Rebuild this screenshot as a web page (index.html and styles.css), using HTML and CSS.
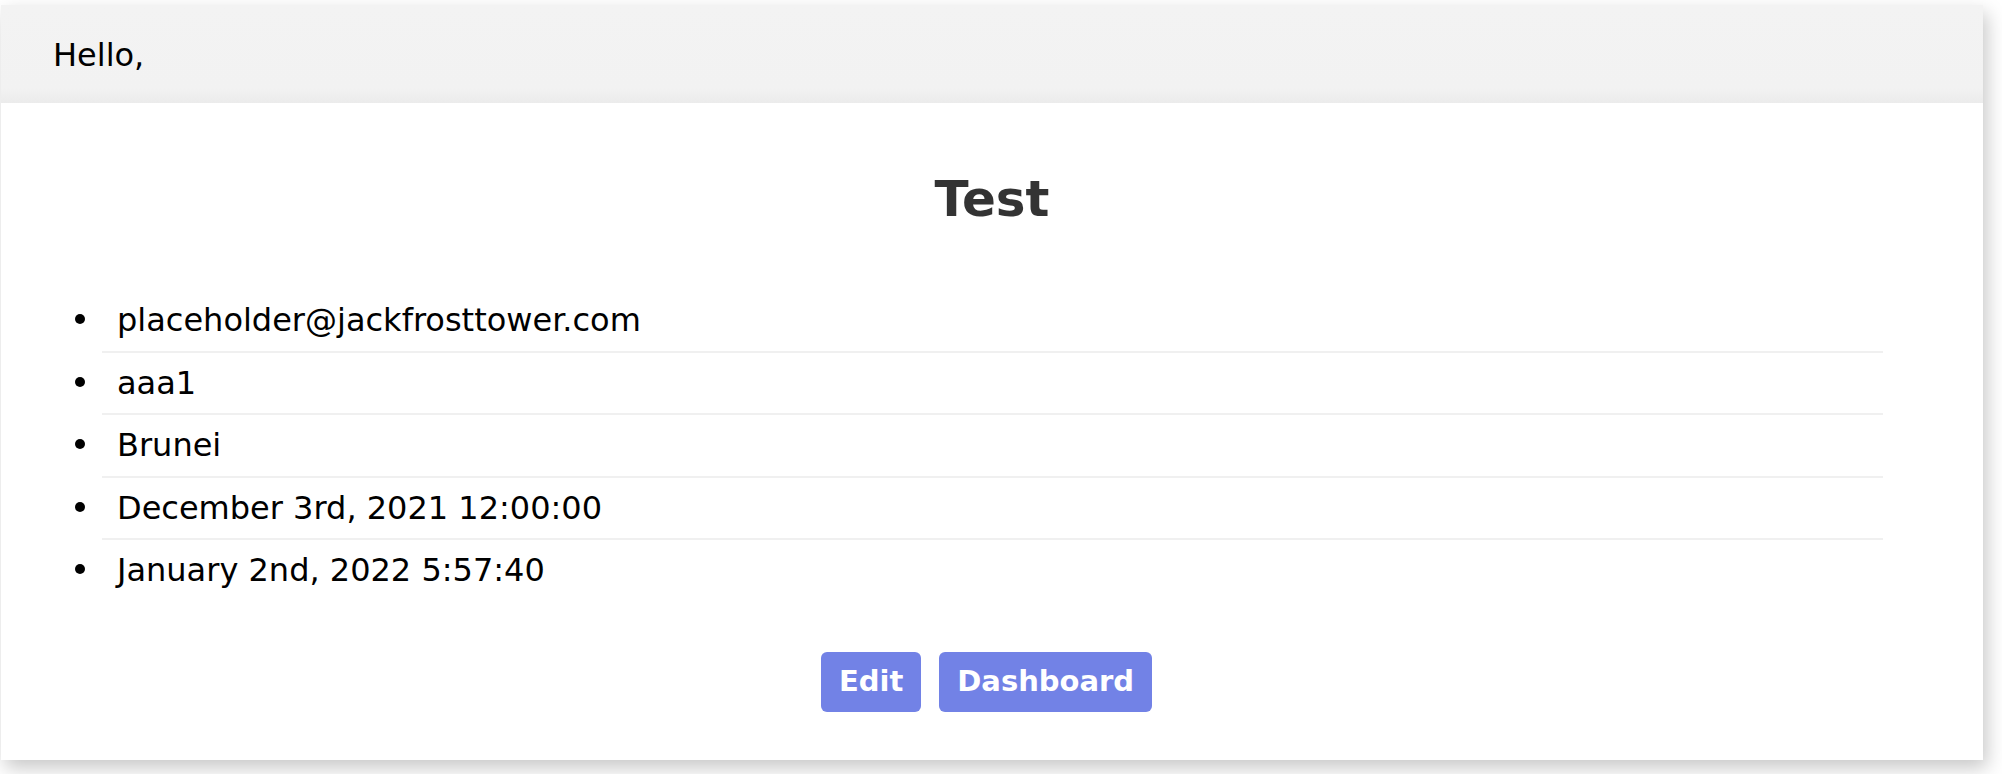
FILE: index.html
```html
<!DOCTYPE html>
<html lang="en">
<head>
<meta charset="utf-8">
<title>Test</title>
<link rel="stylesheet" href="styles.css">
</head>
<body>
<div class="card">
  <header class="topbar">Hello,</header>
  <main class="content">
    <h1 class="title">Test</h1>
    <ul class="details">
      <li>placeholder@jackfrosttower.com</li>
      <li>aaa1</li>
      <li>Brunei</li>
      <li>December 3rd, 2021 12:00:00</li>
      <li>January 2nd, 2022 5:57:40</li>
    </ul>
    <div class="actions">
      <a class="btn" href="#">Edit</a>
      <a class="btn" href="#">Dashboard</a>
    </div>
  </main>
</div>
</body>
</html>
```

FILE: styles.css
```css
html, body {
  margin: 0;
  padding: 0;
  background: #ffffff;
}

body {
  padding: 5px 19px 14px 1px;
  font-family: "DejaVu Sans", "Noto Sans", sans-serif;
  color: #000;
  overflow: hidden;
}

.card {
  background: #fff;
  box-shadow: 4px 8px 18px rgba(0, 0, 0, 0.22);
}

.topbar {
  background: linear-gradient(to bottom, #f3f3f3 0%, #f2f2f2 85%, #ebebeb 100%);
  padding: 34px 52px 32px;
  font-size: 32px;
  line-height: 32px;
}

.content {
  padding: 72px 0 48px;
}

.title {
  margin: 0;
  text-align: center;
  font-size: 50px;
  line-height: 48px;
  font-weight: bold;
  color: #333;
}

.details {
  margin: 67px 100px 0 101px;
  padding: 0;
  list-style: none;
}

.details li {
  position: relative;
  font-size: 32px;
  line-height: 32px;
  padding: 14px 0 14.5px 15px;
  border-bottom: 2px solid #f0f0f0;
}

.details li::before {
  content: "";
  position: absolute;
  left: -27px;
  top: 24px;
  width: 10px;
  height: 10px;
  border-radius: 50%;
  background: #000;
}

.details li:last-child {
  border-bottom: none;
}

.actions {
  margin-top: 51px;
  display: flex;
  justify-content: center;
  gap: 18px;
  padding-right: 11px;
}

.btn {
  display: block;
  background: #7282e6;
  color: #fff;
  text-decoration: none;
  font-weight: bold;
  font-size: 29px;
  line-height: 29px;
  padding: 15.5px 18px;
  border-radius: 6px;
}
```
